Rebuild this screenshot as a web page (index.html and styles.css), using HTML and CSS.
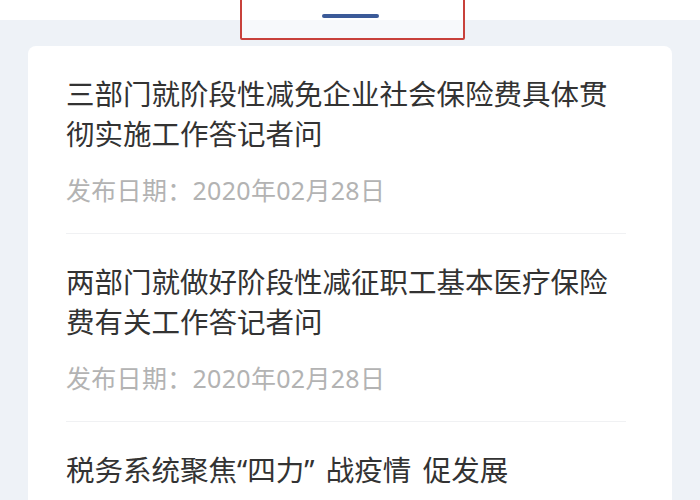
FILE: index.html
```html
<!DOCTYPE html>
<html lang="zh-CN">
<head>
<meta charset="utf-8">
<link rel="stylesheet" href="styles.css">
</head>
<body>
<header class="topbar">
  <div class="highlight-box"></div>
  <div class="tab-indicator"></div>
</header>
<main class="card">
  <article class="item">
    <h2 class="title">三部门就阶段性减免企业社会保险费具体贯彻实施工作答记者问</h2>
    <p class="date">发布日期：2020年02月28日</p>
  </article>
  <article class="item">
    <h2 class="title">两部门就做好阶段性减征职工基本医疗保险费有关工作答记者问</h2>
    <p class="date">发布日期：2020年02月28日</p>
  </article>
  <article class="item">
    <h2 class="title">税务系统聚焦“四力” 战疫情 促发展</h2>
  </article>
</main>
</body>
</html>
```
FILE: styles.css
```css
html, body {
  margin: 0;
  padding: 0;
}
body {
  width: 700px;
  height: 500px;
  overflow: hidden;
  background: #eef2f7;
  font-family: "Noto Sans", "Noto Sans CJK SC", sans-serif;
}
.topbar {
  position: relative;
  height: 20px;
  background: #ffffff;
}
.highlight-box {
  position: absolute;
  left: 240px;
  top: -4px;
  width: 221px;
  height: 40px;
  border: 2.5px solid #c8413b;
  border-radius: 2px;
  background: rgba(255, 255, 255, 0.55);
}
.tab-indicator {
  position: absolute;
  left: 322px;
  top: 14px;
  width: 57px;
  height: 4px;
  border-radius: 2px;
  background: #3b5a98;
}
.card {
  margin: 26px 28px 0;
  background: #ffffff;
  border-radius: 8px;
  padding: 0 46px 0 38px;
}
.item {
  padding: 27.5px 0 28.5px;
  border-bottom: 1px solid #f0f1f3;
}
.title {
  margin: 0;
  font-size: 28.5px;
  line-height: 40px;
  font-weight: 400;
  word-spacing: 4px;
  color: #333333;
}
.date {
  margin: 21px 0 0;
  font-size: 25px;
  line-height: 30px;
  letter-spacing: 0.3px;
  color: #b3b3b3;
}
```
